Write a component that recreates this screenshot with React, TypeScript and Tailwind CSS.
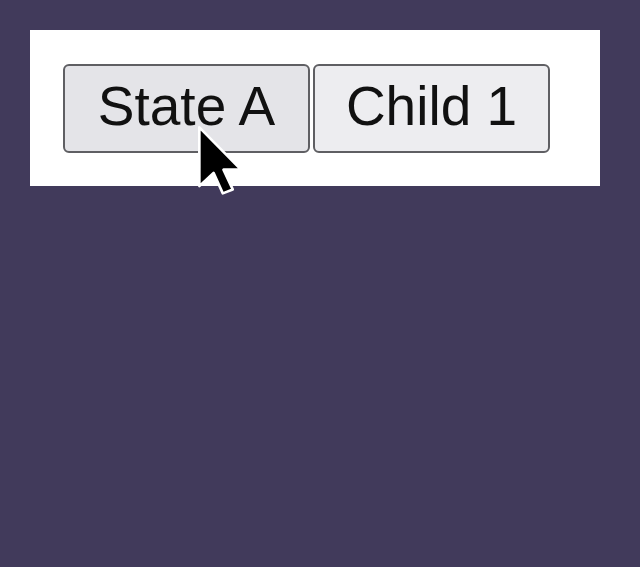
import React from "react";

function Cursor() {
  return (
    <svg
      className="absolute left-[196px] top-[124px] pointer-events-none"
      width="48"
      height="76"
      viewBox="-1 -1 14.5 23"
    >
      <polygon
        points="0,0 0,17.8 4.3,13.8 7.1,20 10.1,18.8 7.3,12.8 12.6,12.8"
        fill="#000"
        stroke="#fff"
        strokeWidth="0.8"
        strokeLinejoin="round"
      />
    </svg>
  );
}

export default function App() {
  return (
    <div className="relative min-h-screen w-full bg-[#413a5b] pt-[30px] pl-[30px]">
      <div className="flex h-[156px] w-[570px] items-start bg-white pl-[33px] pt-[34px]">
        <div className="flex gap-[3px]">
          <button
            className="h-[89px] w-[247px] rounded-[6px] border-2 border-[#5f5f63] bg-[#e4e4e8] pb-[4px] text-[55px] leading-none text-[#111]"
            style={{ fontFamily: '"Liberation Sans", Arial, sans-serif' }}
          >
            State A
          </button>
          <button
            className="h-[89px] w-[237px] rounded-[6px] border-2 border-[#5f5f63] bg-[#ededf0] pb-[4px] text-[55px] leading-none text-[#111]"
            style={{ fontFamily: '"Liberation Sans", Arial, sans-serif' }}
          >
            Child 1
          </button>
        </div>
      </div>
      <Cursor />
    </div>
  );
}
